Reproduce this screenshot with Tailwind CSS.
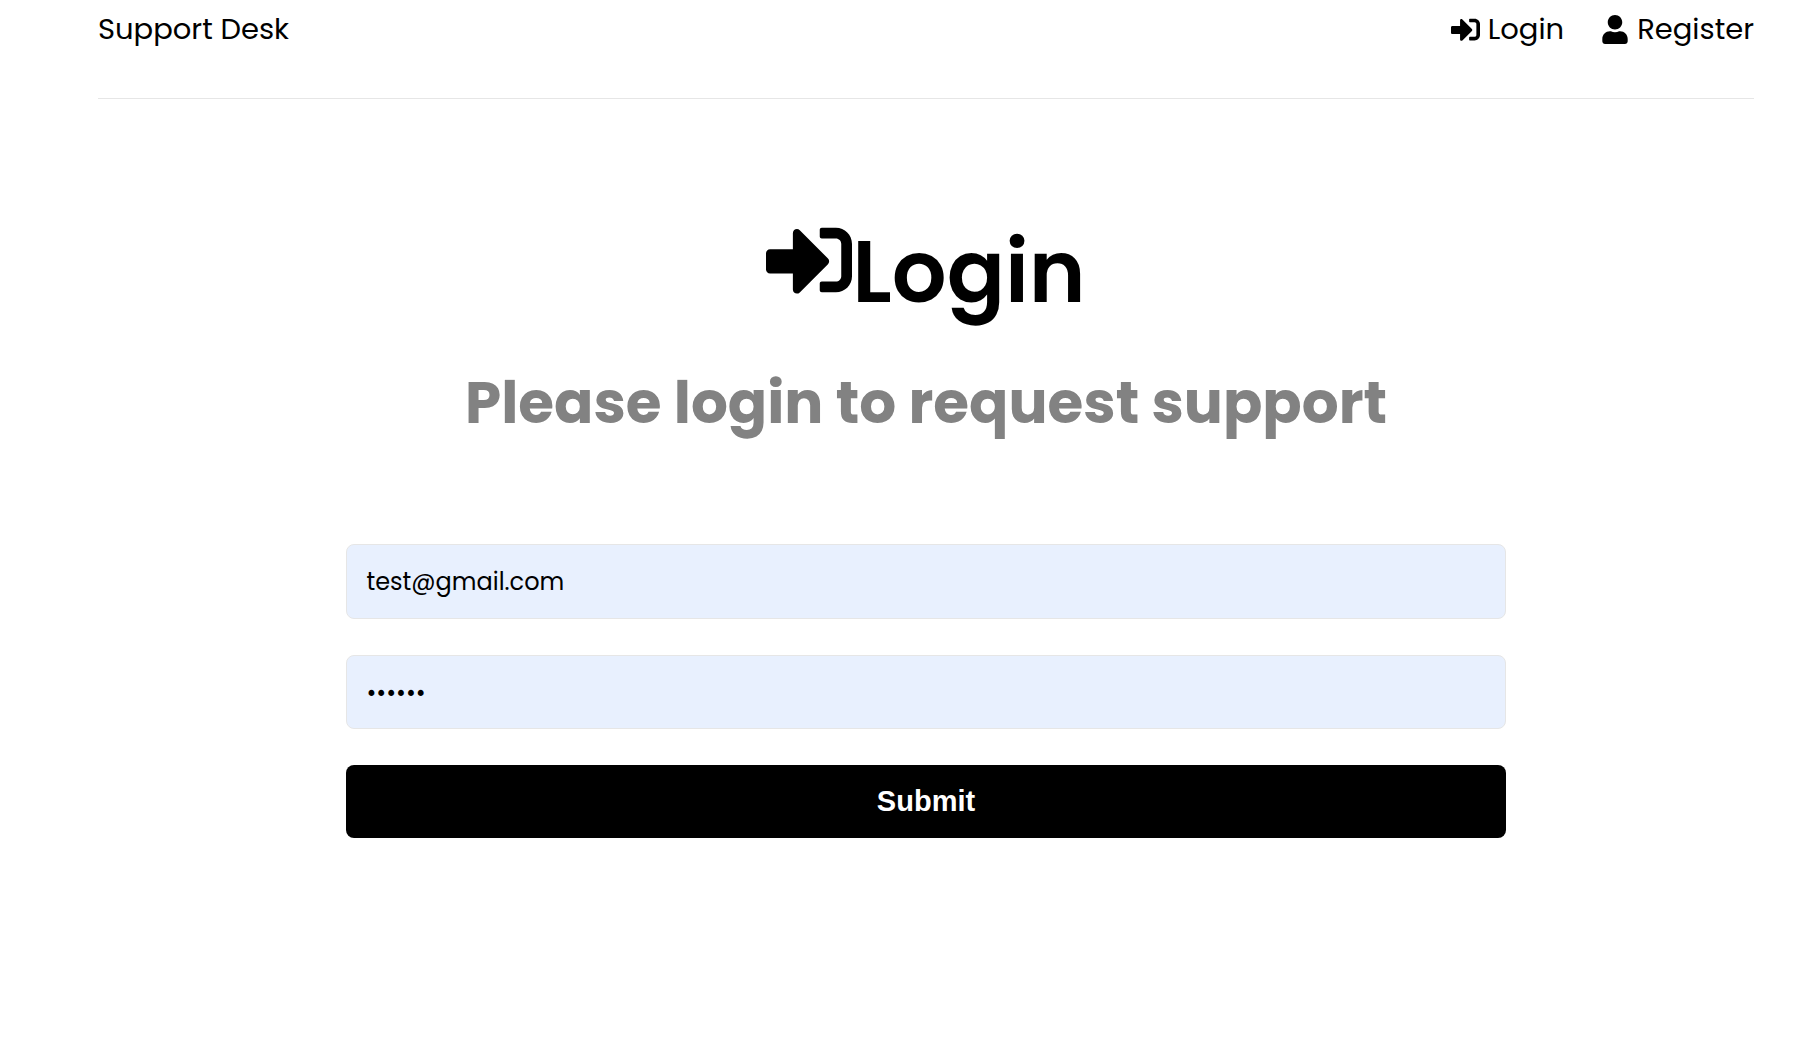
<!DOCTYPE html>
<html lang="en">
<head>
<meta charset="utf-8">
<meta name="viewport" content="width=device-width, initial-scale=1">
<title>Support Desk</title>
<script src="https://cdn.jsdelivr.net/npm/@tailwindcss/browser@4"></script>
</head>
<body class="min-h-screen bg-white pr-14 pl-[98px] font-[Poppins,Inter,sans-serif] text-black">
<svg class="hidden" aria-hidden="true">
  <symbol id="sign-in" viewBox="0 0 512 512"><path d="M416 448h-84c-6.6 0-12-5.4-12-12v-40c0-6.6 5.4-12 12-12h84c17.7 0 32-14.3 32-32V160c0-17.7-14.3-32-32-32h-84c-6.6 0-12-5.4-12-12V76c0-6.6 5.4-12 12-12h84c53 0 96 43 96 96v192c0 53-43 96-96 96zm-47-201L201 79c-15-15-41-4.5-41 17v96H24c-13.3 0-24 10.7-24 24v96c0 13.3 10.7 24 24 24h136v96c0 21.5 26 32 41 17l168-168c9.3-9.4 9.3-24.6 0-34z"/></symbol>
  <symbol id="user" viewBox="0 0 448 512"><path d="M224 256c70.7 0 128-57.3 128-128S294.7 0 224 0 96 57.3 96 128s57.3 128 128 128zm89.6 32h-16.7c-22.2 10.2-46.9 16-72.9 16s-50.6-5.8-72.9-16h-16.7C60.2 288 0 348.2 0 422.4V464c0 26.5 21.5 48 48 48h352c26.5 0 48-21.5 48-48v-41.6c0-74.2-60.2-134.4-134.4-134.4z"/></symbol>
</svg>
<header class="flex items-start justify-between border-b border-[#e6e6e6] pt-2 pb-12 text-[29px] leading-[42px]">
  <a href="#">Support Desk</a>
  <nav>
    <ul class="flex gap-[38px]">
      <li><a href="#" class="flex items-center gap-2"><svg class="size-[29px] fill-current" aria-hidden="true"><use href="#sign-in"/></svg>Login</a></li>
      <li><a href="#" class="flex items-center gap-[9px]"><svg class="h-[29px] w-[26px] fill-current" aria-hidden="true"><use href="#user"/></svg>Register</a></li>
    </ul>
  </nav>
</header>
<main class="text-center">
  <section class="pt-[118px]">
    <h1 class="flex items-start justify-center text-[86px] leading-[110px] font-semibold"><svg class="size-[86px] fill-current" aria-hidden="true"><use href="#sign-in"/></svg>Login</h1>
    <p class="mt-9 text-[58px] leading-[80px] font-bold text-[#828282]">Please login to request support</p>
  </section>
  <form class="mx-auto mt-[101px] flex w-7/10 flex-col gap-9">
    <input type="email" aria-label="Email" value="test@gmail.com" class="h-[75px] w-full rounded-lg border border-[#e6e6e6] bg-[#e8f0fe] px-[19px] text-[24px]">
    <input type="password" aria-label="Password" value="123456" class="h-[74px] w-full rounded-lg border border-[#e6e6e6] bg-[#e8f0fe] px-[19px] text-[24px]">
    <button type="button" class="h-[73px] w-full rounded-lg bg-black font-['Liberation_Sans',Arial,sans-serif] text-[29px] font-bold text-white">Submit</button>
  </form>
</main>
</body>
</html>
